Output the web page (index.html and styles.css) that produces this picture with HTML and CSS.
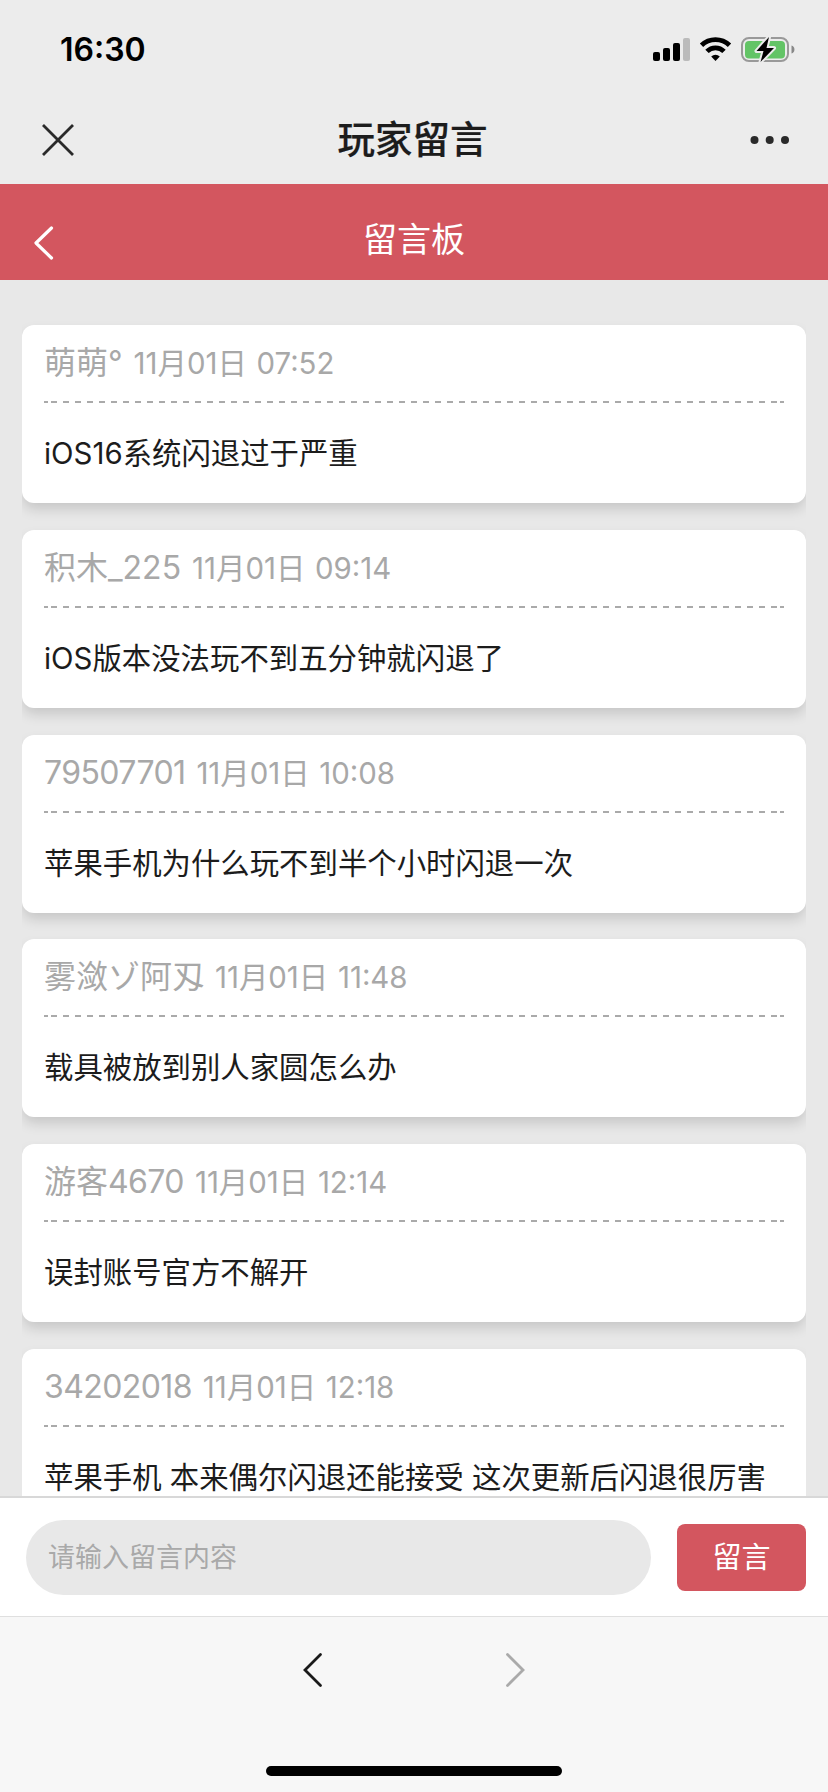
FILE: index.html
```html
<!DOCTYPE html>
<html lang="zh-CN">
<head>
<meta charset="utf-8">
<title>玩家留言</title>
<link rel="stylesheet" href="styles.css">
</head>
<body>
<div class="app">
  <header class="status">
    <span class="clock">16:30</span>
    <svg class="indicators" width="142" height="28" viewBox="0 0 142 28">
      <rect x="0" y="15" width="7" height="9" rx="2"/>
      <rect x="10" y="11" width="7" height="13" rx="2"/>
      <rect x="20" y="6" width="7" height="18" rx="2"/>
      <rect x="30" y="1" width="7" height="23" rx="2" fill="#bbb"/>
      <g fill="none" stroke="#000" stroke-width="4.8">
        <path d="M48.500 8.300A20 20 0 0 1 76.500 8.300"/>
        <path d="M54 14.400A12 12 0 0 1 71 14.400"/>
      </g>
      <path d="M62.500 24L58.200 19.500A6.200 6.200 0 0 1 66.800 19.500Z"/>
      <rect x="89" y="1" width="46" height="23" rx="7" fill="none" stroke="#999" stroke-width="2"/>
      <rect x="92" y="4" width="40" height="17.500" rx="4" fill="#63c466"/>
      <path d="M138.500 8.500v8a4.200 4.200 0 0 0 0-8z" fill="#888"/>
      <path d="M116 0L103.500 14H110.500L107.500 25L121 11H113.500Z" stroke="#ececec" stroke-width="4" stroke-linejoin="round"/>
      <path d="M116 0L103.500 14H110.500L107.500 25L121 11H113.500Z"/>
    </svg>
  </header>
  <nav class="titlebar">
    <svg class="close" width="34" height="34" viewBox="0 0 34 34"><path d="M2 2L32 32M32 2L2 32" fill="none" stroke="#2a2a2a" stroke-width="2.800"/></svg>
    <h1 class="title">玩家留言</h1>
    <svg class="more" width="40" height="10" viewBox="0 0 40 10" fill="#2a2a2a"><circle cx="4.500" cy="5" r="4"/><circle cx="19.700" cy="5" r="4"/><circle cx="35" cy="5" r="4"/></svg>
  </nav>
  <div class="banner">
    <svg class="back" width="22" height="36" viewBox="0 0 22 36"><path d="M18.500 3L3 18L18.500 33" fill="none" stroke="#fff" stroke-width="3.200" stroke-linejoin="round" stroke-linecap="round"/></svg>
    <h2 class="board">留言板</h2>
  </div>
  <main class="list">
    <article class="card"><div class="meta"><span class="name">萌萌°</span><time class="time">11月01日 07:52</time></div><p class="text">iOS16系统闪退过于严重</p></article>
    <article class="card"><div class="meta"><span class="name">积木_225</span><time class="time">11月01日 09:14</time></div><p class="text">iOS版本没法玩不到五分钟就闪退了</p></article>
    <article class="card"><div class="meta"><span class="name numeric">79507701</span><time class="time">11月01日 10:08</time></div><p class="text">苹果手机为什么玩不到半个小时闪退一次</p></article>
    <article class="card"><div class="meta"><span class="name">雾潋ゾ阿刄</span><time class="time">11月01日 11:48</time></div><p class="text">载具被放到别人家圆怎么办</p></article>
    <article class="card"><div class="meta"><span class="name">游客<span class="numeric">4670</span></span><time class="time">11月01日 12:14</time></div><p class="text">误封账号官方不解开</p></article>
    <article class="card"><div class="meta"><span class="name numeric">34202018</span><time class="time">11月01日 12:18</time></div><p class="text">苹果手机 本来偶尔闪退还能接受 这次更新后闪退很厉害</p></article>
  </main>
  <form class="composer">
    <input class="field" type="text" placeholder="请输入留言内容">
    <button class="send" type="button">留言</button>
  </form>
  <footer class="toolbar">
    <div class="history">
      <svg width="22" height="36" viewBox="0 0 22 36"><path d="M18.500 2.500L3 18L18.500 33.500" fill="none" stroke="#1a1a1a" stroke-width="2.800" stroke-linecap="round"/></svg>
      <svg width="22" height="36" viewBox="0 0 22 36"><path d="M3.500 2.500L19 18L3.500 33.500" fill="none" stroke="#aaa" stroke-width="2.800" stroke-linecap="round"/></svg>
    </div>
    <div class="home"></div>
  </footer>
</div>
</body>
</html>
```
FILE: styles.css
```css
* { box-sizing: border-box; }
body {
  margin: 0;
  font-family: Inter, "Noto Sans CJK SC", sans-serif;
  color: #1c1c1c;
}
h1, h2, p { margin: 0; }
svg { display: block; }
.app {
  width: 828px;
  height: 1792px;
  display: flex;
  flex-direction: column;
  overflow: hidden;
  background: #e8e8e8;
}
.status {
  height: 96px;
  flex: none;
  display: flex;
  justify-content: space-between;
  padding: 30px 33px 0 60px;
  background: #ececec;
}
.clock { font-size: 32px; line-height: 40px; font-weight: 600; color: #000; }
.indicators { margin-top: 7px; }
.titlebar {
  height: 88px;
  flex: none;
  display: grid;
  grid-template-columns: 1fr auto 1fr;
  align-items: center;
  padding: 0 38px 0 41px;
  background: #ececec;
}
.title {
  margin-right: 6px;
  font-size: 37.500px;
  line-height: 50px;
  font-weight: 500;
  -webkit-text-stroke: .2px currentColor;
}
.more { justify-self: end; }
.banner {
  height: 96px;
  flex: none;
  display: grid;
  grid-template-columns: 1fr auto 1fr;
  align-items: center;
  padding: 16px 33px 0;
  background: #d3565f;
  color: #fff;
}
.back { margin-top: 5px; }
.board { font-size: 34px; line-height: 44px; font-weight: 400; }
.list {
  flex: 1;
  min-height: 0;
  overflow: hidden;
  padding: 45px 22px 0;
}
.card {
  height: 178px;
  margin-bottom: 26.800px;
  padding: 0 22px;
  border-radius: 12px;
  background: #fff;
  box-shadow: 0 7px 13px -1px rgba(0, 0, 0, .15);
  clip-path: inset(-4px 0 -26px 0);
}
.meta {
  height: 78px;
  display: flex;
  align-items: baseline;
  padding-top: 15px;
  color: #a8a8a8;
  background:
    linear-gradient(#aaa, #aaa) left bottom / 4px 2px no-repeat,
    linear-gradient(#aaa, #aaa) right bottom / 4px 2px no-repeat,
    linear-gradient(90deg, #aaa 1px, transparent 1px 7px, #aaa 7px) left bottom / 12px 2px repeat-x;
}
.name { font-size: 32px; line-height: 46px; margin-right: 11px; white-space: nowrap; }
.numeric { letter-spacing: -.6px; }
.time { font-size: 29.400px; line-height: 46px; word-spacing: 1.500px; white-space: nowrap; }
.text { padding-top: 29px; font-size: 29.400px; line-height: 44px; white-space: nowrap; }
.composer {
  height: 120px;
  flex: none;
  display: flex;
  align-items: center;
  gap: 26px;
  padding: 0 22px 0 26px;
  margin: 0;
  background: #fff;
  border-top: 2px solid #d8d8d8;
}
.field {
  flex: 1;
  min-width: 0;
  height: 75px;
  border: 0;
  border-radius: 38px;
  padding: 0 22px;
  background: #e8e8e8;
  font: inherit;
  font-size: 27px;
}
.field::placeholder { color: #a9a9a9; opacity: 1; }
.send {
  width: 129px;
  height: 67px;
  border: 0;
  border-radius: 8px;
  padding: 0 0 4px;
  background: #d3565f;
  color: #fff;
  font: inherit;
  font-size: 29px;
}
.toolbar {
  height: 176px;
  flex: none;
  display: flex;
  flex-direction: column;
  align-items: center;
  justify-content: space-between;
  padding: 35px 0 16px;
  background: #f7f7f7;
  border-top: 1px solid #dfdfdf;
}
.history { display: flex; gap: 180px; }
.home { width: 296px; height: 10px; border-radius: 5px; background: #000; }
```
